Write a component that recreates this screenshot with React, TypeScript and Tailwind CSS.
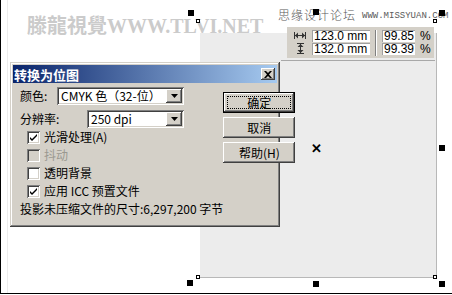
import React from "react";

const raised =
  "shadow-[inset_-1px_-1px_#404040,inset_1px_1px_#ffffff,inset_-2px_-2px_#808080,inset_2px_2px_#d4d0c8]";
const sunken =
  "shadow-[inset_1px_1px_#808080,inset_-1px_-1px_#ffffff,inset_2px_2px_#404040,inset_-2px_-2px_#d4d0c8]";

function Handle({ x, y }: { x: number; y: number }) {
  return <div className="absolute h-[6px] w-[6px] bg-black" style={{ left: x, top: y }} />;
}

function Hollow({ x, y }: { x: number; y: number }) {
  return <div className="absolute h-[4px] w-[4px] border border-black bg-white" style={{ left: x, top: y }} />;
}

function Select({ value, width }: { value: string; width: number }) {
  return (
    <div className={`flex h-[18px] items-stretch bg-white p-[2px] ${sunken}`} style={{ width }}>
      <span className="flex-1 pl-[2px] text-[12px] leading-[14px] text-black">{value}</span>
      <span className={`flex w-[16px] items-center justify-center bg-[#d4d0c8] ${raised}`}>
        <svg width="7" height="4" viewBox="0 0 7 4">
          <path d="M0 0h7L3.5 4z" fill="#000" />
        </svg>
      </span>
    </div>
  );
}

function Check({ label, checked, disabled }: { label: React.ReactNode; checked?: boolean; disabled?: boolean }) {
  return (
    <div className="flex h-[18px] items-center">
      <span
        className={`ml-[7px] flex h-[13px] w-[13px] items-center justify-center ${sunken} ${
          disabled ? "bg-[#d4d0c8]" : "bg-white"
        }`}
      >
        {checked && (
          <svg width="7" height="7" viewBox="0 0 7 7">
            <path d="M0 3l2 2 5-5v2L2 7 0 5z" fill="#000" />
          </svg>
        )}
      </span>
      <span className={`ml-[4px] text-[12px] leading-none ${disabled ? "text-[#9a9890]" : "text-black"}`}>{label}</span>
    </div>
  );
}

function Button({ children, def }: { children: React.ReactNode; def?: boolean }) {
  if (def) {
    return (
      <div className="h-[21px] w-[72px] border border-black">
        <div className={`flex h-full w-full items-center justify-center bg-[#d4d0c8] p-[3px] ${raised}`}>
          <div className="flex h-full w-full items-center justify-center border border-dotted border-black text-[12px] leading-none">
            {children}
          </div>
        </div>
      </div>
    );
  }
  return (
    <div className={`flex h-[21px] w-[72px] items-center justify-center bg-[#d4d0c8] text-[12px] leading-none ${raised}`}>
      {children}
    </div>
  );
}

function Field({ value, width }: { value: string; width: number }) {
  return (
    <div
      className="h-[12px] border-t border-l border-[#a0a0a0] bg-white pl-[1px] font-['Liberation_Sans',sans-serif] text-[12px] leading-[11px] text-black whitespace-nowrap"
      style={{ width }}
    >
      {value}
    </div>
  );
}

export default function App() {
  return (
    <div className="relative h-[295px] w-[452px] overflow-hidden bg-white font-['Noto_Sans_CJK_SC',sans-serif] text-black">
      {/* frame */}
      <div className="absolute left-0 top-0 h-[294px] w-[452px] border-b border-l border-black" />
      <div className="absolute left-[7px] top-0 h-[293px] w-px bg-[#ececec]" />

      {/* page */}
      <div className="absolute left-[200px] top-[33px] h-[245px] w-[237px] border-b border-r border-[#b8b8b8] bg-[#ececec]" />

      {/* watermarks */}
      <div className="absolute left-[27px] top-[13px] whitespace-nowrap font-['Liberation_Serif',serif] text-[20px] font-bold leading-[24px] text-[#cbcbcb]">
        <span className="font-['Noto_Sans_CJK_TC',serif]">滕龍視覺</span>WWW.TLVI.NET
      </div>
      <div className="absolute left-[278px] top-[7px] flex items-end whitespace-nowrap text-[#5a5a5a]">
        <span className="text-[12px] font-light leading-[16px] tracking-[1px]">思缘设计论坛</span>
        <span className="ml-[6px] mb-[2px] font-['Liberation_Mono',monospace] text-[9px] leading-[10px]">WWW.MISSYUAN.COM</span>
      </div>

      {/* handles */}
      <Handle x={188} y={10} />
      <Handle x={313} y={9} />
      <Handle x={439} y={10} />
      <Handle x={439} y={145} />
      <Handle x={187} y={280} />
      <Handle x={313} y={281} />
      <Handle x={439} y={281} />
      <Hollow x={196} y={19} />
      <Hollow x={433} y={19} />
      <Hollow x={196} y={275} />
      <Hollow x={433} y={275} />
      <div className="absolute left-[311px] top-[141px] text-[13px] font-bold leading-[14px]">✕</div>

      {/* property bar */}
      <div className="absolute left-[287px] top-[27px] flex h-[31px] w-[147px] items-center bg-[#d4d0c8] pl-[3px]">
        <div className="flex w-[20px] flex-col items-center gap-[4px]">
          <svg width="12" height="7" viewBox="0 0 12 7">
            <path d="M0.5 0v7M11.5 0v7M1 3.5h10" stroke="#333" strokeWidth="1" />
            <path d="M1 3.5l3-3v6zM11 3.5l-3-3v6z" fill="#333" />
          </svg>
          <svg width="7" height="11" viewBox="0 0 7 11">
            <path d="M0 0.5h7M0 10.5h7M3.5 1v9" stroke="#333" strokeWidth="1" />
            <path d="M3.5 1l-3 3h6zM3.5 10l-3-3h6z" fill="#333" />
          </svg>
        </div>
        <div className="ml-[2px] flex flex-col gap-[1px]">
          <Field value="123.0 mm" width={58} />
          <Field value="132.0 mm" width={58} />
        </div>
        <div className="ml-[5px] h-[26px] w-[2px] border-l border-r border-l-[#808080] border-r-white" />
        <div className="ml-[5px] flex flex-col gap-[1px]">
          <Field value="99.85" width={33} />
          <Field value="99.39" width={33} />
        </div>
        <div className="ml-[5px] flex flex-col gap-[1px] font-['Liberation_Sans',sans-serif] text-[12px] leading-[12px]">
          <span>%</span>
          <span>%</span>
        </div>
      </div>
      <div className="absolute left-[281px] top-[60px] h-px w-[154px] bg-[#a8a8a8]" />

      {/* dialog */}
      <div className="absolute left-[10px] top-[62px] flex h-[165px] w-[270px] flex-col bg-[#d4d0c8] p-[3px] shadow-[inset_-1px_-1px_#404040,inset_1px_1px_#d4d0c8,inset_-2px_-2px_#808080,inset_2px_2px_#ffffff]">
        <div className="flex h-[18px] items-center bg-[linear-gradient(to_right,#0a246a,#a6caf0)] pl-[1px] pr-[2px]">
          <span className="flex-1 text-[13px] font-bold leading-none text-white">转换为位图</span>
          <span className={`flex h-[12px] w-[14px] items-center justify-center bg-[#d4d0c8] ${raised}`}>
            <svg width="8" height="7" viewBox="0 0 8 7">
              <path d="M0 0h2l2 2 2-2h2L5 3.5 8 7H6L4 5 2 7H0l3-3.5z" fill="#000" />
            </svg>
          </span>
        </div>

        <div className="flex flex-1">
          <div className="flex-1 whitespace-nowrap pl-[7px]">
            <div className="mt-[4px] flex h-[18px] items-center">
              <span className="w-[37px] text-[12px] leading-none">颜色:</span>
              <Select value="CMYK 色（32-位）" width={127} />
            </div>
            <div className="mt-[5px] flex h-[18px] items-center">
              <span className="w-[67px] text-[12px] leading-none">分辨率:</span>
              <Select value="250 dpi" width={97} />
            </div>
            <Check checked label="光滑处理(A)" />
            <Check disabled label="抖动" />
            <Check label="透明背景" />
            <Check checked label="应用 ICC 预置文件" />
            <div className="flex h-[18px] items-center text-[12px] leading-none">投影未压缩文件的尺寸:6,297,200 字节</div>
          </div>
          <div className="mr-[4px] flex flex-col gap-[4px] pt-[9px]">
            <Button def>确定</Button>
            <Button>取消</Button>
            <Button>帮助(H)</Button>
          </div>
        </div>
      </div>
    </div>
  );
}
